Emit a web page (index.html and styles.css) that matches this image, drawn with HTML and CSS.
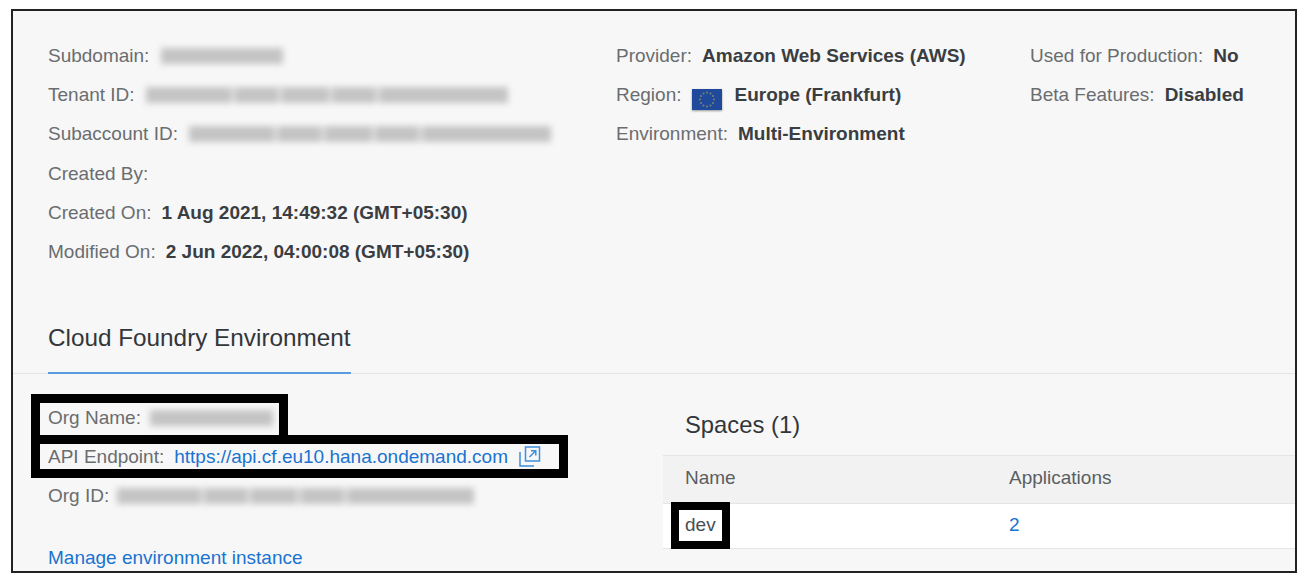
FILE: index.html
```html
<!DOCTYPE html>
<html lang="en">
<head>
    <meta charset="UTF-8">
    <meta name="viewport" content="width=device-width, initial-scale=1.0">
    <title>Subaccount Overview</title>
    <link rel="stylesheet" href="styles.css">
</head>
<body>
    <div class="frame">
        <div class="info">
            <div class="info-col">
                <div class="row"><span class="label">Subdomain:</span><span class="blur blur-short"></span></div>
                <div class="row"><span class="label">Tenant ID:</span><span class="blur blur-id"></span></div>
                <div class="row"><span class="label">Subaccount ID:</span><span class="blur blur-id"></span></div>
                <div class="row"><span class="label">Created By:</span></div>
                <div class="row"><span class="label">Created On:</span><span class="value">1 Aug 2021, 14:49:32 (GMT+05:30)</span></div>
                <div class="row"><span class="label">Modified On:</span><span class="value">2 Jun 2022, 04:00:08 (GMT+05:30)</span></div>
            </div>
            <div class="info-col">
                <div class="row"><span class="label">Provider:</span><span class="value">Amazon Web Services (AWS)</span></div>
                <div class="row">
                    <span class="label">Region:</span>
                    <svg class="flag" viewBox="0 0 30 21">
                        <rect width="30" height="21" fill="#1f4a9c"/>
                        <g fill="#7f8470">
                            <circle cx="15" cy="3.5" r="1"/><circle cx="18.5" cy="4.4" r="1"/><circle cx="21" cy="7" r="1"/>
                            <circle cx="22" cy="10.5" r="1"/><circle cx="21" cy="14" r="1"/><circle cx="18.5" cy="16.6" r="1"/>
                            <circle cx="15" cy="17.5" r="1"/><circle cx="11.5" cy="16.6" r="1"/><circle cx="9" cy="14" r="1"/>
                            <circle cx="8" cy="10.5" r="1"/><circle cx="9" cy="7" r="1"/><circle cx="11.5" cy="4.4" r="1"/>
                        </g>
                    </svg>
                    <span class="value">Europe (Frankfurt)</span>
                </div>
                <div class="row"><span class="label">Environment:</span><span class="value">Multi-Environment</span></div>
            </div>
            <div class="info-col">
                <div class="row"><span class="label">Used for Production:</span><span class="value">No</span></div>
                <div class="row"><span class="label">Beta Features:</span><span class="value">Disabled</span></div>
            </div>
        </div>

        <div class="tabs">
            <div class="tab">Cloud Foundry Environment</div>
        </div>

        <div class="env">
            <div class="env-left">
                <div class="row"><span class="label">Org Name:</span><span class="blur blur-name"></span></div>
                <div class="row">
                    <span class="label">API Endpoint:</span>
                    <a class="link" href="#">https://api.cf.eu10.hana.ondemand.com</a>
                    <svg class="ext" viewBox="0 0 22 21" fill="none" stroke="#3d8fe0" stroke-width="1.5">
                        <rect x="6.5" y="1" width="14" height="14"/>
                        <path d="M1 6v14h14"/>
                        <path d="M10.5 11 16.5 5M12 4.8h4.8v4.8"/>
                    </svg>
                </div>
                <div class="row"><span class="label">Org ID:</span><span class="blur blur-org"></span></div>
                <a class="link manage" href="#">Manage environment instance</a>
            </div>
            <div class="env-right">
                <div class="spaces-title">Spaces (1)</div>
                <div class="table-row table-head"><span class="cell-name">Name</span><span>Applications</span></div>
                <div class="table-row table-body"><span class="cell-name">dev</span><a class="link" href="#">2</a></div>
            </div>
        </div>

        <div class="mark mark-org"></div>
        <div class="mark mark-api"></div>
        <div class="mark mark-dev"></div>
    </div>
</body>
</html>
```

FILE: styles.css
```css
body {
    margin: 0;
    background: white;
    font-family: "Liberation Sans", Arial, sans-serif;
    font-size: 19px;
    color: #32363a;
}
.frame {
    position: relative;
    box-sizing: border-box;
    width: 1286px;
    height: 564px;
    margin: 9px 0 0 11px;
    border: 2px solid #222;
    background: #f7f7f7;
    overflow: hidden;
}
.info {
    display: grid;
    grid-template-columns: 568px 414px 1fr;
    box-sizing: border-box;
    height: 261px;
    padding: 25px 0 0 35px;
}
.row {
    display: flex;
    align-items: center;
    height: 39.3px;
    white-space: nowrap;
}
.label {
    color: #6a6d70;
    margin-right: 10px;
}
.value {
    font-weight: 700;
    color: #3a3e42;
}
.blur {
    height: 16px;
    margin-left: 2px;
    filter: blur(3px);
    background-color: #c4c4c4;
}
.blur-short {
    width: 122px;
}
.blur-name {
    width: 123px;
    margin-left: -1px;
}
.blur-id {
    width: 362px;
    margin-left: 1px;
    background-image: linear-gradient(90deg, transparent 23%, #e4e4e4 24%, transparent 25%, transparent 36%, #e4e4e4 37%, transparent 38%, transparent 50%, #e4e4e4 51%, transparent 52%, transparent 63%, #e4e4e4 64%, transparent 65%);
}
.blur-org {
    width: 357px;
    margin-left: -2px;
    background-image: linear-gradient(90deg, transparent 23%, #e4e4e4 24%, transparent 25%, transparent 36%, #e4e4e4 37%, transparent 38%, transparent 50%, #e4e4e4 51%, transparent 52%, transparent 63%, #e4e4e4 64%, transparent 65%);
}
.flag {
    width: 30px;
    height: 21px;
    margin: 10px 13px 0 0;
    box-shadow: 0 1px 2px rgba(0,0,0,0.4);
}
.tabs {
    display: flex;
    height: 101px;
    align-items: flex-end;
    padding-left: 35px;
    border-bottom: 1px solid #e5e5e5;
}
.tab {
    font-size: 24.3px;
    line-height: 50px;
    padding-bottom: 9px;
    margin-bottom: -1px;
    border-bottom: 2px solid #5b9ade;
}
.env {
    display: flex;
}
.env-left {
    width: 650px;
    flex: none;
    box-sizing: border-box;
    padding: 24px 0 0 35px;
}
.env-right {
    flex: 1;
}
.link {
    color: #1a73d0;
    text-decoration: none;
}
.ext {
    width: 22px;
    height: 21px;
    margin-left: 11px;
}
.manage {
    display: block;
    margin-top: 31px;
    line-height: 22px;
}
.spaces-title {
    font-size: 23.8px;
    height: 81px;
    box-sizing: border-box;
    padding: 30px 0 0 22px;
    line-height: 42px;
}
.table-row {
    display: flex;
    align-items: center;
    border-top: 1px solid #e5e5e5;
}
.table-head {
    height: 43px;
    padding-bottom: 4px;
    background: #f2f2f2;
    color: #5a5e62;
}
.table-body {
    height: 42px;
    padding-bottom: 2px;
    background: white;
    border-bottom: 1px solid #e5e5e5;
    color: #4a4e52;
}
.cell-name {
    width: 324px;
    padding-left: 22px;
}
.mark {
    position: absolute;
    box-sizing: border-box;
    border: 9px solid black;
}
.mark-org {
    left: 18px;
    top: 383px;
    width: 257px;
    height: 50px;
}
.mark-api {
    left: 18px;
    top: 424px;
    width: 537px;
    height: 43px;
}
.mark-dev {
    left: 658px;
    top: 491px;
    width: 59px;
    height: 47px;
    border-width: 8px;
}
```
